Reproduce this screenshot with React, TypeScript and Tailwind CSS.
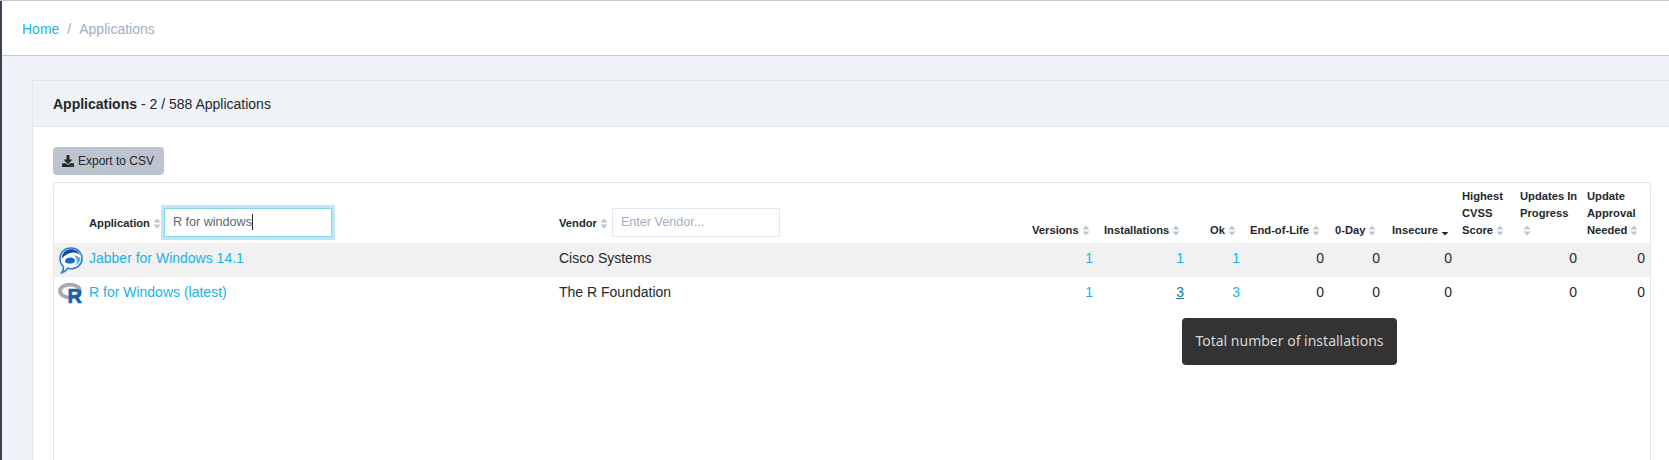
import { FaDownload } from "react-icons/fa";

function Sort({ dir }: { dir?: "down" }) {
  if (dir === "down") {
    return (
      <svg width="8" height="10" viewBox="0 0 8 10" className="inline-block ml-[3px] align-[-2px]">
        <path d="M0.5 6 H7.5 L4 9.5 Z" fill="#23282c" />
      </svg>
    );
  }
  return (
    <svg width="8" height="11" viewBox="0 0 8 11" className="inline-block ml-[3px] align-[-2px]">
      <path d="M4 0.5 L7.5 4.5 H0.5 Z M0.5 6.5 H7.5 L4 10.5 Z" fill="#bcc4cf" />
    </svg>
  );
}

function JabberIcon() {
  return (
    <svg width="24" height="27" viewBox="0 0 24 27">
      <path d="M12 1 C18.4 1 23 5.5 23 11.5 C23 17.5 18.4 21.8 12 21.8 C10.8 21.8 9.6 21.6 8.6 21.3 C7.4 23.2 5.4 25 2.8 25.6 C4 24 4.6 22 4.5 19.6 C2.2 17.6 1 14.8 1 11.5 C1 5.5 5.6 1 12 1 Z" fill="#ffffff" stroke="#2a7fd0" strokeWidth="1.6" />
      <path d="M2.6 12 C2.6 6 7 2.2 12 2.2 C16.2 2.2 19.8 4.4 21.4 8.4 C19 5.8 15.6 5 12.4 5.8 C8 6.8 4.6 9 2.6 12 Z" fill="#15479c" />
      <path d="M6 14 C6.2 11.8 8.4 10.4 11 10.4 C13.6 10.4 15.8 11.4 16 13.4 C16.1 15.4 13.6 16.6 10.8 16.6 C8.2 16.6 5.9 15.8 6 14 Z" fill="#1a66c8" />
      <path d="M15 8.6 C17.4 8.8 19.8 9.8 21.6 11.2 C21.2 14 19.6 17 17 18.4 C18.4 15.6 18 11.4 15 8.6 Z" fill="#6fa8e0" />
    </svg>
  );
}

function RIcon() {
  return (
    <svg width="26" height="28" viewBox="0 0 26 28">
      <ellipse cx="12" cy="11" rx="10" ry="6.4" fill="none" stroke="#a9abb3" strokeWidth="3.8" />
      <text x="9.5" y="22.5" fontFamily="Liberation Sans, sans-serif" fontWeight="700" fontSize="20" fill="#1f5fb0" stroke="#1f5fb0" strokeWidth="0.7">R</text>
    </svg>
  );
}

const th = "align-bottom text-left font-bold px-[5px] pb-[4px] text-[11.2px] leading-[17px]";
const tdNum = "align-top text-right px-[5px] py-[5px]";
const link = "text-[#20b2e8]";

export default function App() {
  const rows = [
    { icon: <JabberIcon />, name: "Jabber for Windows 14.1", vendor: "Cisco Systems", inst: "1", ok: "1", hover: false },
    { icon: <RIcon />, name: "R for Windows (latest)", vendor: "The R Foundation", inst: "3", ok: "3", hover: true },
  ];
  return (
    <div className="relative h-[460px] w-[1669px] overflow-hidden bg-[#eff2f7] text-[14px] leading-[21px] text-[#23282c] border-t-[1px] border-[#c3c9d2] font-['Liberation_Sans',Arial,sans-serif]">
      <div className="flex h-[459px]">
        <div className="w-[2px] shrink-0 bg-[#3a4352]" />
        <div className="flex-1 min-w-0 flex flex-col">
          <div className="h-[55px] shrink-0 bg-white border-b border-[#c3c9d2] flex items-center px-[20px] pt-[2px]">
            <a className={link}>Home</a>
            <span className="pl-[8px] pr-[8px] text-[#a0aec0]">/</span>
            <span className="text-[#a0aec0]">Applications</span>
          </div>
          <div className="flex-1 min-h-0 pt-[24px] pl-[30px]">
            <div className="h-full bg-white border-l border-t border-[#e1e6ef]">
              <div className="h-[46px] bg-[#eff2f7] border-b border-[#e1e6ef] flex items-center pl-[20px] pt-[2px]">
                <b className="font-bold">Applications</b>
                <span>&nbsp;- 2 / 588 Applications</span>
              </div>
              <div className="pl-[20px] pr-[18px] pt-[20px] h-full">
                <button className="flex h-[28px] w-[111px] items-center justify-center gap-[4px] rounded-[4px] bg-[#bcc4cf] text-[12px] text-[#23282c] pr-[1px]">
                  <FaDownload className="w-[12px] h-[12px] mb-[1px]" />
                  <span className="mt-[1px]">Export to CSV</span>
                </button>
                <div className="mt-[7px] h-[300px] w-[1598px] border border-[#e1e6ef] rounded-t-[4px] border-b-0">
                  <table className="table-fixed border-collapse w-[1596px]">
                    <colgroup>
                      <col className="w-[30px]" />
                      <col className="w-[470px]" />
                      <col className="w-[472px]" />
                      <col className="w-[73px]" />
                      <col className="w-[90px]" />
                      <col className="w-[56px]" />
                      <col className="w-[84px]" />
                      <col className="w-[56px]" />
                      <col className="w-[71px]" />
                      <col className="w-[58px]" />
                      <col className="w-[68px]" />
                      <col className="w-[68px]" />
                    </colgroup>
                    <thead>
                      <tr className="h-[60px]">
                        <th />
                        <th className={th + " pb-[6px]"}>
                          <div className="flex items-center">
                            <span className="pt-[2px]">Application<Sort /></span>
                            <div className="ml-[3px] flex h-[29.5px] w-[168px] items-center border border-[#8ad4ee] pl-[8px] text-[12.6px] font-normal text-[#5c6873] ring-[3px] ring-[#bfe6f5]">
                              <span className="border-r border-[#23282c] leading-[16px]">R for windows</span>
                            </div>
                          </div>
                        </th>
                        <th className={th + " pb-[6px]"}>
                          <div className="flex items-center">
                            <span className="pt-[2px]">Vendor<Sort /></span>
                            <input
                              placeholder="Enter Vendor..."
                              className="ml-[4px] h-[29.5px] w-[168px] border border-[#e1e6ef] pl-[8px] text-[12.6px] font-normal placeholder:text-[#a0aec0] outline-none"
                            />
                          </div>
                        </th>
                        <th className={th + " pl-[6px]"}>Versions<Sort /></th>
                        <th className={th}>Installations<Sort /></th>
                        <th className={th + " pl-[21px]"}>Ok<Sort /></th>
                        <th className={th}>End-of-Life<Sort /></th>
                        <th className={th + " pl-[6px]"}>0-Day<Sort /></th>
                        <th className={th + " pl-[7px]"}>Insecure<Sort dir="down" /></th>
                        <th className={th + " pl-[6px]"}>Highest CVSS Score<Sort /></th>
                        <th className={th + " pl-[6px] pr-0"}>Updates In Progress<br /><Sort /></th>
                        <th className={th}>Update Approval Needed<Sort /></th>
                      </tr>
                    </thead>
                    <tbody>
                      {rows.map((r, i) => (
                        <tr key={r.name} className={i === 0 ? "h-[34px] bg-[#f1f1f1]" : "h-[34px]"}>
                          <td className="align-top pt-[3px] pl-[4px]">
                            <div className="flex h-[28px] items-center justify-center">{r.icon}</div>
                          </td>
                          <td className="align-top px-[5px] py-[5px]"><a className={link}>{r.name}</a></td>
                          <td className="align-top px-[5px] py-[5px]">{r.vendor}</td>
                          <td className={tdNum + " pr-[6px]"}><a className={link}>1</a></td>
                          <td className={tdNum}>
                            <a className={r.hover ? "text-[#167495] underline" : link}>{r.inst}</a>
                          </td>
                          <td className={tdNum}><a className={link}>{r.ok}</a></td>
                          <td className={tdNum}>0</td>
                          <td className={tdNum}>0</td>
                          <td className={tdNum + " pr-[4px]"}>0</td>
                          <td className={tdNum} />
                          <td className={tdNum}>0</td>
                          <td className={tdNum}>0</td>
                        </tr>
                      ))}
                    </tbody>
                  </table>
                </div>
              </div>
            </div>
          </div>
        </div>
      </div>
      <div className="absolute left-[1182px] top-[317px] flex h-[47px] w-[215px] items-center justify-center rounded-[4px] bg-[#333333] pb-[2px] font-['Noto_Sans',sans-serif] text-[14px] text-[#d6d6d6]">
        Total number of installations
      </div>
    </div>
  );
}
